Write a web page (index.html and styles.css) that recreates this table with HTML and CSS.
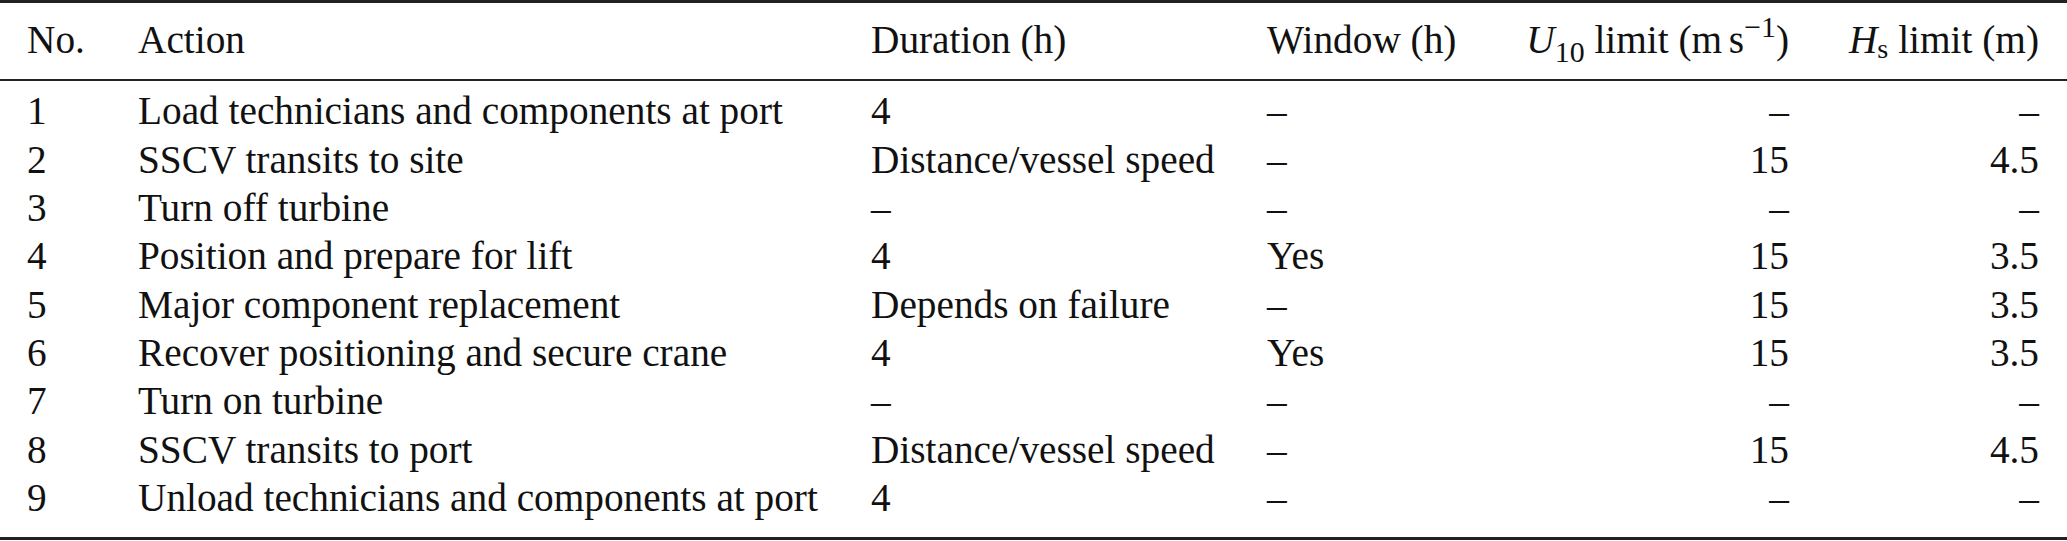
FILE: index.html
```html
<!DOCTYPE html>
<html lang="en">
<head>
<meta charset="utf-8">
<title>Table</title>
<link rel="stylesheet" href="styles.css">
</head>
<body>
<table class="tbl">
  <colgroup>
    <col class="c-no">
    <col class="c-act">
    <col class="c-dur">
    <col class="c-win">
    <col class="c-u">
    <col class="c-h">
  </colgroup>
  <thead>
    <tr>
      <th class="no">No.</th>
      <th>Action</th>
      <th>Duration (h)</th>
      <th>Window (h)</th>
      <th class="r u-col"><i>U</i><span class="sub sub-num">10</span> limit (m<span class="thin"></span>s<span class="sup">&minus;1</span>)</th>
      <th class="r h-col"><i>H</i><span class="sub sub-s">s</span> limit (m)</th>
    </tr>
  </thead>
  <tbody>
    <tr><td class="no">1</td><td>Load technicians and components at port</td><td>4</td><td>&ndash;</td><td class="r u-col">&ndash;</td><td class="r h-col">&ndash;</td></tr>
    <tr><td class="no">2</td><td>SSCV transits to site</td><td>Distance/vessel speed</td><td>&ndash;</td><td class="r u-col">15</td><td class="r h-col">4.5</td></tr>
    <tr><td class="no">3</td><td>Turn off turbine</td><td>&ndash;</td><td>&ndash;</td><td class="r u-col">&ndash;</td><td class="r h-col">&ndash;</td></tr>
    <tr><td class="no">4</td><td>Position and prepare for lift</td><td>4</td><td>Yes</td><td class="r u-col">15</td><td class="r h-col">3.5</td></tr>
    <tr><td class="no">5</td><td>Major component replacement</td><td>Depends on failure</td><td>&ndash;</td><td class="r u-col">15</td><td class="r h-col">3.5</td></tr>
    <tr><td class="no">6</td><td>Recover positioning and secure crane</td><td>4</td><td>Yes</td><td class="r u-col">15</td><td class="r h-col">3.5</td></tr>
    <tr><td class="no">7</td><td>Turn on turbine</td><td>&ndash;</td><td>&ndash;</td><td class="r u-col">&ndash;</td><td class="r h-col">&ndash;</td></tr>
    <tr><td class="no">8</td><td>SSCV transits to port</td><td>Distance/vessel speed</td><td>&ndash;</td><td class="r u-col">15</td><td class="r h-col">4.5</td></tr>
    <tr><td class="no">9</td><td>Unload technicians and components at port</td><td>4</td><td>&ndash;</td><td class="r u-col">&ndash;</td><td class="r h-col">&ndash;</td></tr>
  </tbody>
</table>
</body>
</html>
```
FILE: styles.css
```css
html, body {
  margin: 0;
  padding: 0;
  background: #ffffff;
}

.tbl {
  width: 2067px;
  table-layout: fixed;
  border-collapse: collapse;
  border-spacing: 0;
  font-family: "Liberation Serif", "Times New Roman", serif;
  font-size: 39.3px;
  line-height: 48.3px;
  color: #111111;
  border-top: 3px solid #222222;
  border-bottom: 3px solid #222222;
}

.c-no { width: 138px; }
.c-act { width: 733px; }
.c-dur { width: 396px; }
.c-win { width: 242px; }
.c-u { width: 310px; }
.c-h { width: 248px; }

.tbl th,
.tbl td {
  padding: 0;
  text-align: left;
  font-weight: normal;
  white-space: nowrap;
  vertical-align: baseline;
}

.tbl thead th {
  padding-top: 12.6px;
  padding-bottom: 15px;
  border-bottom: 2px solid #222222;
}

.tbl tbody tr:first-child td {
  padding-top: 6.6px;
}

.tbl tbody tr:last-child td {
  padding-bottom: 15.2px;
}

.tbl .no {
  padding-left: 27px;
}

.tbl .r {
  text-align: right;
}

.tbl .u-col {
  padding-right: 30px;
}

.tbl .h-col {
  padding-right: 28px;
}

.sub {
  line-height: 0;
}

.sub-num {
  font-size: 0.76em;
  vertical-align: -0.3em;
}

.sub-s {
  font-size: 0.72em;
  vertical-align: -0.16em;
}

.sup {
  font-size: 0.76em;
  line-height: 0;
  vertical-align: 0.55em;
}

.thin {
  display: inline-block;
  width: 0.17em;
}
```
